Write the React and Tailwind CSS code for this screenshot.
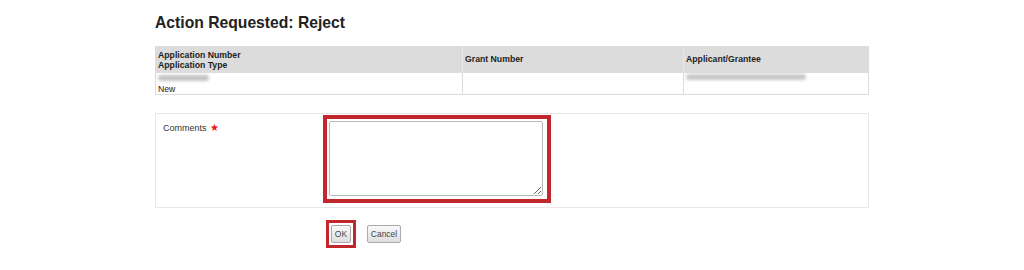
export default function App() {
  const font = { fontFamily: '"Liberation Sans", Arial, sans-serif' };
  return (
    <div className="w-[1024px] h-[270px] bg-white overflow-hidden" style={font}>
      <div className="mx-auto w-[714px] pt-[13px]">
        <h1 className="text-[15.7px] font-bold text-[#222] leading-[20px]">Action Requested: Reject</h1>

        <table className="mt-[13px] w-full border-collapse border border-[#dcdcdc] text-[8.7px] text-[#222]">
          <thead>
            <tr className="bg-[#dcdcdc] h-[26px]">
              <th className="w-[307px] text-left font-bold px-[2px] align-middle leading-[10px] border-r border-[#e8e8e8]">
                Application Number<br />Application Type
              </th>
              <th className="w-[221px] text-left font-bold px-[2px] align-middle border-r border-[#e8e8e8]">Grant Number</th>
              <th className="text-left font-bold px-[2px] align-middle">Applicant/Grantee</th>
            </tr>
          </thead>
          <tbody>
            <tr className="h-[22px]">
              <td className="align-top px-[2px] pt-[1px] border-r border-[#dcdcdc]">
                <div className="w-[51px] h-[6px] rounded-full bg-[#c4c4c4] blur-[1.5px] mt-[1px]"></div>
                <div className="leading-[10px] mt-[3px]">New</div>
              </td>
              <td className="border-r border-[#dcdcdc]"></td>
              <td className="align-top px-[2px] pt-[1px]">
                <div className="w-[120px] h-[6px] rounded-full bg-[#c8c8c8] blur-[1.5px]"></div>
              </td>
            </tr>
          </tbody>
        </table>

        <div className="mt-[18px] h-[95px] border border-[#e8e8e8] flex">
          <div className="w-[167px] pl-[7px] pt-[9px] text-[9px] text-[#333] leading-[10px] flex items-start gap-[3px]">
            <span>Comments</span>
            <span className="text-[#e11] text-[10px] leading-[9px]">★</span>
          </div>
          <div className="mt-[1px] w-[228px] h-[88px] border-[4px] border-[#c1272d] p-[2px]">
            <textarea className="block w-[214px] h-[75px] border border-[#bbb] rounded-[2px] bg-white resize-y outline-none" />
          </div>
        </div>

        <div className="mt-[12px] ml-[171px] flex items-center gap-[11px]">
          <div className="border-[3px] border-[#c1272d] p-[2px]">
            <button className="block w-[20px] h-[18px] border border-[#aaa] rounded-[2px] bg-gradient-to-b from-[#fafafa] to-[#dedede] text-[8.5px] text-[#444] leading-[16px]">OK</button>
          </div>
          <button className="block w-[34px] h-[18px] border border-[#aaa] rounded-[2px] bg-gradient-to-b from-[#fafafa] to-[#dedede] text-[8.5px] text-[#444] leading-[16px]">Cancel</button>
        </div>
      </div>
    </div>
  );
}
